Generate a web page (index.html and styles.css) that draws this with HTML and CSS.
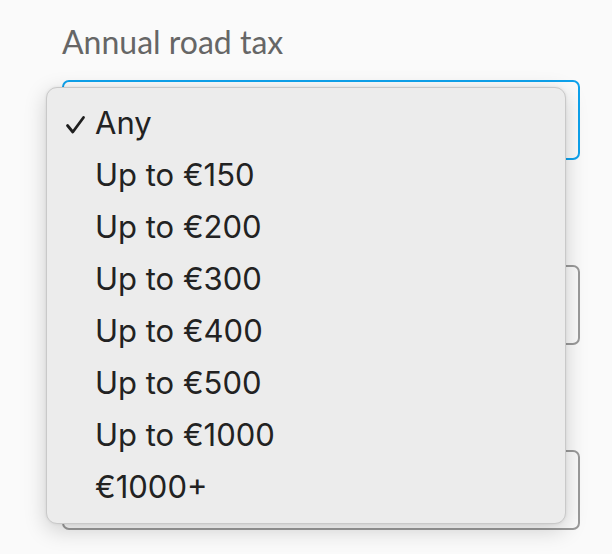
FILE: index.html
```html
<!DOCTYPE html>
<html lang="en">
<head>
    <meta charset="UTF-8">
    <meta name="viewport" content="width=device-width, initial-scale=1.0">
    <title>Annual road tax</title>
    <link rel="stylesheet" href="styles.css">
</head>
<body>
    <div class="form">
        <div class="field-group">
            <label class="field-label">Annual road tax</label>
            <div class="field field-active"></div>
        </div>
        <div class="field-group">
            <div class="field-label"></div>
            <div class="field"></div>
        </div>
        <div class="field-group">
            <div class="field-label"></div>
            <div class="field"></div>
        </div>
    </div>

    <!-- native select popup -->
    <ul class="select-menu">
        <li class="option selected">
            <svg class="check" width="22" height="20" viewBox="0 0 22 20" fill="none" xmlns="http://www.w3.org/2000/svg">
                <path d="M2.5 10.5L7.8 17L18.5 2.5" stroke="#1f1f1f" stroke-width="2.8" stroke-linecap="round" stroke-linejoin="round"/>
            </svg>
            Any
        </li>
        <li class="option">Up to €150</li>
        <li class="option">Up to €200</li>
        <li class="option">Up to €300</li>
        <li class="option">Up to €400</li>
        <li class="option">Up to €500</li>
        <li class="option">Up to €1000</li>
        <li class="option">€1000+</li>
    </ul>
</body>
</html>
```

FILE: styles.css
```css
body {
    margin: 0;
    padding: 0;
    background-color: #fafafa;
    font-family: 'Lato', 'Liberation Sans', sans-serif;
    height: 554px;
    overflow: hidden;
    position: relative;
}

.form {
    padding: 25px 32px 0 62px;
    display: flex;
    flex-direction: column;
    gap: 50px;
}

.field-group {
    display: flex;
    flex-direction: column;
    gap: 5px;
}

.field-label {
    display: block;
    height: 50px;
    font-size: 32px;
    line-height: 33px;
    color: #666666;
}

.field {
    height: 80px;
    box-sizing: border-box;
    border: 2px solid #9a9a9a;
    border-radius: 7px;
    background-color: #fafafa;
}

.field-active {
    border-color: #0ea2ec;
}

.select-menu {
    position: absolute;
    top: 87px;
    left: 46px;
    width: 520px;
    height: 437px;
    box-sizing: border-box;
    margin: 0;
    padding: 8px 0 13px;
    list-style: none;
    background-color: #ececec;
    border: 1px solid #c9c9c9;
    border-radius: 11px;
    box-shadow: 0 6px 22px rgba(0, 0, 0, 0.18), 0 0 3px rgba(0, 0, 0, 0.08);
    font-family: 'Inter', 'Noto Sans', sans-serif;
    color: #222222;
}

.option {
    height: 52px;
    display: flex;
    align-items: center;
    padding-left: 48px;
    font-size: 31px;
    position: relative;
}

.check {
    position: absolute;
    left: 18px;
    top: 19px;
}
```
